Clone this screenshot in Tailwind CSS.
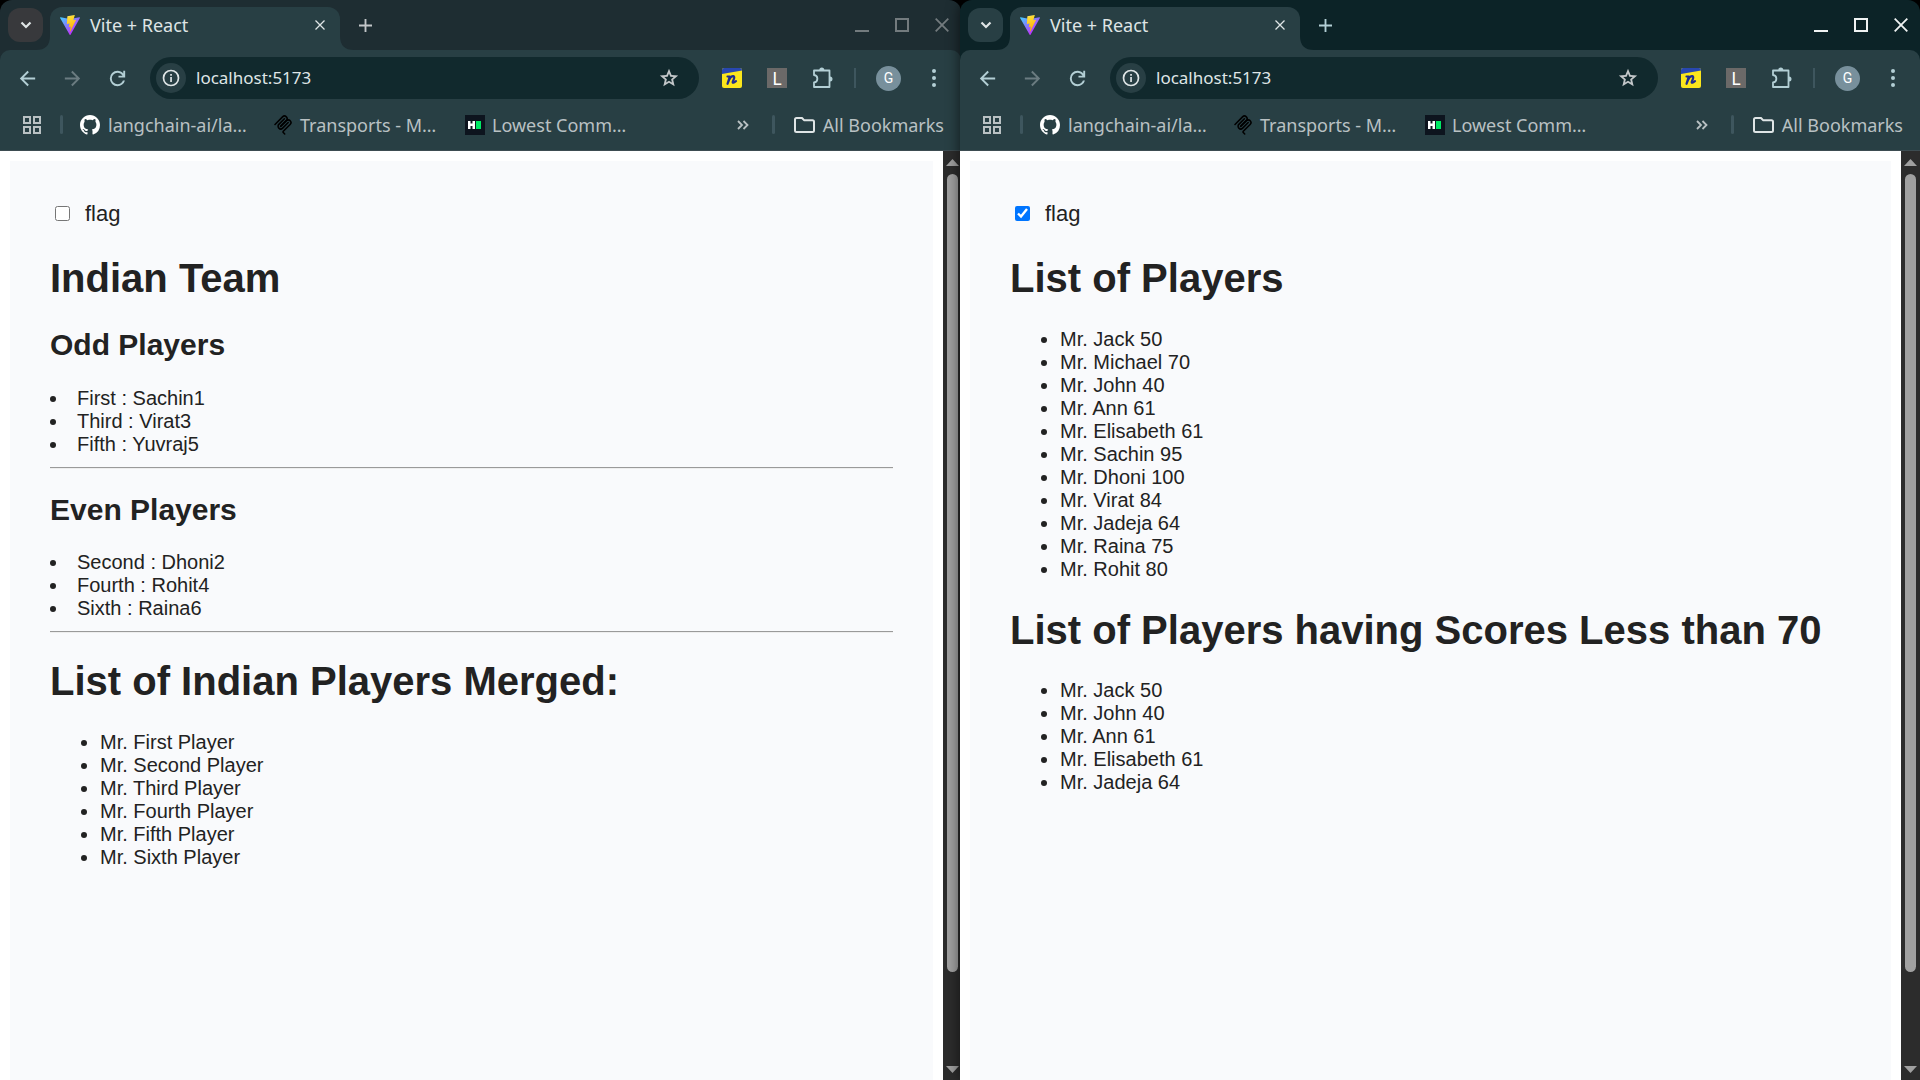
<!DOCTYPE html>
<html lang="en">
<head>
<meta charset="utf-8">
<title>Vite + React</title>
<script src="https://cdn.jsdelivr.net/npm/@tailwindcss/browser@4"></script>
</head>
<body class="bg-black">
<svg class="absolute size-0" aria-hidden="true">
  <defs>
    <linearGradient id="va" x1="0" y1="0" x2="0.7" y2="0.8"><stop offset="0" stop-color="#41d1ff"/><stop offset="1" stop-color="#bd34fe"/></linearGradient>
    <linearGradient id="vb" x1="0.4" y1="0" x2="0.6" y2="1"><stop offset="0" stop-color="#ffea83"/><stop offset="0.1" stop-color="#ffdd35"/><stop offset="1" stop-color="#ffa800"/></linearGradient>
  </defs>
  <symbol id="vite" viewBox="0 0 256 257"><path fill="url(#va)" d="M255.153 37.938 134.897 252.976c-2.483 4.44-8.862 4.466-11.382.048L.875 37.958c-2.746-4.814 1.371-10.646 6.827-9.67l120.385 21.517a6.537 6.537 0 0 0 2.322-.004l117.867-21.483c5.438-.991 9.574 4.796 6.877 9.62Z"/><path fill="url(#vb)" d="M185.432.063 96.44 17.501a3.268 3.268 0 0 0-2.634 3.014l-5.474 92.456a3.268 3.268 0 0 0 3.997 3.378l24.777-5.718c2.318-.535 4.413 1.507 3.936 3.838l-7.361 36.047c-.495 2.426 1.782 4.5 4.151 3.78l15.304-4.649c2.372-.72 4.652 1.36 4.15 3.788l-11.698 56.621c-.732 3.542 3.979 5.473 5.943 2.437l1.313-2.028 72.516-144.72c1.215-2.423-.88-5.186-3.54-4.672l-25.505 4.922c-2.396.462-4.435-1.77-3.759-4.114l16.646-57.705c.677-2.35-1.37-4.583-3.769-4.113Z"/></symbol>
  <symbol id="github" viewBox="0 0 16 16"><path fill="currentColor" d="M8 0C3.58 0 0 3.58 0 8c0 3.54 2.29 6.53 5.47 7.59.4.07.55-.17.55-.38 0-.19-.01-.82-.01-1.49-2.01.37-2.53-.49-2.69-.94-.09-.23-.48-.94-.82-1.13-.28-.15-.68-.52-.01-.53.63-.01 1.08.58 1.23.82.72 1.21 1.87.87 2.33.66.07-.52.28-.87.51-1.07-1.78-.2-3.64-.89-3.64-3.95 0-.87.31-1.59.82-2.15-.08-.2-.36-1.02.08-2.12 0 0 .67-.21 2.2.82.64-.18 1.32-.27 2-.27s1.36.09 2 .27c1.53-1.04 2.2-.82 2.2-.82.44 1.1.16 1.92.08 2.12.51.56.82 1.27.82 2.15 0 3.07-1.87 3.75-3.65 3.95.29.25.54.73.54 1.48 0 1.07-.01 1.93-.01 2.2 0 .21.15.46.55.38A8.01 8.01 0 0 0 16 8c0-4.42-3.58-8-8-8"/></symbol>
  <symbol id="mcp" viewBox="0 0 180 180"><g fill="none" stroke="currentColor" stroke-width="14" stroke-linecap="round"><path d="M18 84.853 85.882 16.97c9.373-9.372 24.569-9.372 33.941 0 9.373 9.373 9.373 24.569 0 33.942L68.558 102.177"/><path d="m69.265 101.47 50.558-50.558c9.373-9.373 24.569-9.373 33.941 0l.354.353c9.372 9.373 9.372 24.569 0 33.941l-61.394 61.394a8 8 0 0 0 0 11.314l12.606 12.606"/><path d="M102.853 33.941 52.648 84.146c-9.373 9.372-9.373 24.568 0 33.941 9.372 9.372 24.568 9.372 33.941 0l50.205-50.205"/></g></symbol>
  <symbol id="hr" viewBox="0 0 20 20"><path fill="#0d141e" d="M0 0h20v20H0z"/><path fill="#fff" d="M3 6h2.500v2.500h2V6H10v8H7.500v-3h-2v3H3z"/><path fill="#00ea64" d="M11 6h5v8h-5z"/></symbol>
  <symbol id="back" viewBox="0 0 24 24"><path fill="currentColor" d="m7.825 13 5.600 5.600L12 20l-8-8 8-8 1.425 1.400L7.825 11H20v2z"/></symbol>
  <symbol id="forward" viewBox="0 0 24 24"><path fill="currentColor" d="M16.175 13H4v-2h12.175l-5.600-5.600L12 4l8 8-8 8-1.425-1.400z"/></symbol>
  <symbol id="reload" viewBox="0 0 24 24"><path fill="currentColor" d="M12 20q-3.350 0-5.675-2.325T4 12t2.325-5.675T12 4q1.725 0 3.300.713T18 6.750V4h2v7h-7V9h4.200q-.8-1.400-2.187-2.200T12 6Q9.500 6 7.750 7.750T6 12t1.750 4.250T12 18q1.925 0 3.475-1.100T17.650 14h2.100q-.7 2.650-2.850 4.325T12 20"/></symbol>
  <symbol id="info" viewBox="0 0 18 18"><circle cx="9" cy="9" r="7.500" fill="none" stroke="currentColor" stroke-width="1.700"/><path fill="currentColor" d="M8.200 8h1.700v5H8.200zM8.200 5h1.700v1.700H8.200z"/></symbol>
  <symbol id="star" viewBox="0 0 24 24"><path fill="currentColor" d="m8.850 16.825 3.150-1.900 3.150 1.925-.825-3.600 2.775-2.400-3.650-.325-1.450-3.400-1.450 3.375-3.650.325 2.775 2.425zM5.825 21l1.625-7.025L2 9.250l7.200-.625L12 2l2.800 6.625 7.200.625-5.450 4.725L18.175 21 12 17.275z"/></symbol>
  <symbol id="puzzle" viewBox="0 0 22 22"><path fill="none" stroke="currentColor" stroke-width="1.800" stroke-linejoin="round" d="M2 3.500h15.500v16.500H2v-4.500c4.500-.5 4.500-7 0-7.500z"/><path fill="currentColor" d="M7.300 3a2.500 2.500 0 0 1 5 0zM18 9.500a2.500 2.500 0 0 1 0 5z"/></symbol>
  <symbol id="next" viewBox="0 0 20 20"><rect width="20" height="20" rx="2" fill="#fbe61c"/><path fill="#2847b0" d="M2 0h16a2 2 0 0 1 2 2v.5L0 6V2a2 2 0 0 1 2-2z"/><path fill="none" stroke="#1c2b8f" stroke-width="2.200" stroke-linecap="round" stroke-linejoin="round" d="M5.500 8.500h2.300L5.500 15.800l1.500-3.800q2-4 4.300-3.800 1.400.3.700 2.500l-1.300 3.300q-.3 1.800 3.300-.8"/></symbol>
  <symbol id="apps" viewBox="0 0 18 18"><path fill="none" stroke="currentColor" stroke-width="2" d="M1 1h6v6H1zM11 1h6v6h-6zM1 11h6v6H1zM11 11h6v6h-6z"/></symbol>
  <symbol id="folder" viewBox="0 0 21 16"><path fill="none" stroke="currentColor" stroke-width="2" stroke-linejoin="round" d="M2.500 1H8l2 2.200h8.500q1.500 0 1.500 1.500v8.800q0 1.500-1.500 1.500h-16Q1 15 1 13.500v-11Q1 1 2.500 1z"/></symbol>
  <symbol id="more" viewBox="0 0 12 10"><path fill="none" stroke="currentColor" stroke-width="1.800" d="m1 1 4 4-4 4M6.500 1l4 4-4 4"/></symbol>
  <symbol id="chevron" viewBox="0 0 12 8"><path fill="none" stroke="currentColor" stroke-width="2.200" d="m1.500 1.500 4.500 4.500 4.500-4.500"/></symbol>
  <symbol id="x" viewBox="0 0 14 14"><path fill="none" stroke="currentColor" stroke-width="1.800" d="m.7.7 12.600 12.600M13.300.7.700 13.300"/></symbol>
  <symbol id="plus" viewBox="0 0 14 14"><path fill="none" stroke="currentColor" stroke-width="2" d="M7 0v14M0 7h14"/></symbol>
  <symbol id="dots" viewBox="0 0 4 18"><g fill="currentColor"><circle cx="2" cy="2" r="2"/><circle cx="2" cy="9" r="2"/><circle cx="2" cy="16" r="2"/></g></symbol>
  <symbol id="flare" viewBox="0 0 14 14"><path fill="currentColor" d="M14 0v14H0Q14 14 14 0z"/></symbol>
</svg>

<main class="grid min-h-screen grid-cols-2 font-['Liberation_Sans',Arial,sans-serif] text-[20px] leading-[23px] text-[#222]">

  <section class="-mr-px flex min-w-0 flex-col overflow-hidden" aria-label="First window">
    <header class="rounded-t-[12px] bg-[#1e2d32] font-['Noto_Sans',sans-serif] text-[18px] leading-6 text-[#dfe5e6]">
      <div class="flex h-[50px] items-center pr-3 pl-2">
        <button aria-label="Search tabs" class="flex h-[34px] w-[35px] items-center justify-center rounded-[12px] bg-[#38393c]"><svg class="h-2 w-3"><use href="#chevron"/></svg></button>
        <div class="relative ml-[7px] flex h-[43px] w-[290px] items-center self-end rounded-t-[12px] bg-[#283f44] pr-[15px] pb-2 pl-[10px]">
          <svg class="absolute bottom-0 -left-[14px] size-[14px] text-[#283f44]"><use href="#flare"/></svg>
          <svg class="absolute -right-[14px] bottom-0 size-[14px] -scale-x-100 text-[#283f44]"><use href="#flare"/></svg>
          <svg class="size-5"><use href="#vite"/></svg>
          <span class="ml-[10px] flex-1">Vite + React</span>
          <button aria-label="Close tab"><svg class="size-[10px]"><use href="#x"/></svg></button>
        </div>
        <button aria-label="New tab" class="ml-[19px] text-[#c3c7c9]"><svg class="size-[13px]"><use href="#plus"/></svg></button>
        <div class="ml-auto flex items-center gap-[26px] text-[#737b7e]">
          <button aria-label="Minimize" class="h-[14px] w-[14px] border-b-2 border-current"></button>
          <button aria-label="Maximize" class="size-[14px] border-2 border-current"></button>
          <button aria-label="Close window"><svg class="size-[14px]"><use href="#x"/></svg></button>
        </div>
      </div>
      <div class="rounded-t-[10px] border-b border-[#3d4c51] bg-[#283f44]">
        <div class="flex h-14 items-center pr-[25px] pl-4 text-[#b3cfd5]">
          <button aria-label="Back"><svg class="size-[23px]"><use href="#back"/></svg></button>
          <button aria-label="Forward" class="ml-[22px] text-[#6b7c81]"><svg class="size-[23px]"><use href="#forward"/></svg></button>
          <button aria-label="Reload" class="ml-[22px]"><svg class="size-[23px]"><use href="#reload"/></svg></button>
          <div class="ml-[21px] flex h-[42px] flex-1 items-center rounded-full bg-[#11292d] pr-[19px] pl-[6px] text-[#dfe5e6]">
            <button aria-label="Site information" class="flex size-[30px] items-center justify-center rounded-full bg-[#283f44]"><svg class="size-[18px]"><use href="#info"/></svg></button>
            <input aria-label="Address" value="localhost:5173" class="ml-[10px] min-w-0 flex-1 bg-transparent text-[17px] outline-none">
            <button aria-label="Bookmark this page" class="text-[#c3c7c9]"><svg class="size-[22px]"><use href="#star"/></svg></button>
          </div>
          <button aria-label="Notes extension" class="ml-[23px]"><svg class="size-5"><use href="#next"/></svg></button>
          <button aria-label="L extension" class="ml-[25px] flex h-5 w-5 items-center justify-center bg-[#6b6968] text-white">L</button>
          <button aria-label="Extensions" class="ml-[25px]"><svg class="size-[22px]"><use href="#puzzle"/></svg></button>
          <span class="ml-[20px] h-5 w-[2px] bg-[#3e565e]"></span>
          <button aria-label="Profile" class="ml-[20px] flex size-[25px] items-center justify-center rounded-full bg-[#78909c] font-['Roboto',sans-serif] text-[14px] text-white">G</button>
          <button aria-label="Menu" class="ml-[31px]"><svg class="h-[18px] w-1"><use href="#dots"/></svg></button>
        </div>
        <nav aria-label="Bookmarks" class="flex h-11 items-center pr-[17px] pb-[7px] pl-[23px] whitespace-nowrap text-[#b9c1c3]">
          <button aria-label="Apps"><svg class="size-[18px]"><use href="#apps"/></svg></button>
          <span class="ml-[19px] h-[19px] w-[3px] rounded bg-[#3e565e]"></span>
          <a href="#" class="ml-[17px] flex w-[169px] items-center gap-2"><svg class="size-5 shrink-0 text-white"><use href="#github"/></svg>langchain-ai/la…</a>
          <a href="#" class="ml-[24px] flex w-[166px] items-center gap-[7px]"><svg class="size-5 shrink-0 text-black"><use href="#mcp"/></svg>Transports - M…</a>
          <a href="#" class="ml-[26px] flex items-center gap-[7px]"><svg class="size-5 shrink-0"><use href="#hr"/></svg>Lowest Comm…</a>
          <button aria-label="More bookmarks" class="ml-auto"><svg class="h-[10px] w-3"><use href="#more"/></svg></button>
          <span class="ml-[23px] h-[19px] w-[3px] rounded bg-[#3e565e]"></span>
          <button class="ml-[19px] flex items-center gap-2"><svg class="h-4 w-[21px] text-[#dfe5e6]"><use href="#folder"/></svg>All Bookmarks</button>
        </nav>
      </div>
    </header>
    <div class="flex flex-1">
      <div class="flex min-w-0 flex-1 flex-col bg-white px-[10px] pt-[10px]">
        <article class="flex-1 bg-[#f9fafc] p-10">
          <label class="mb-[29px] flex items-center text-[22px] leading-[25px]"><input type="checkbox" class="mr-[15px] ml-[5px] size-[15px]">flag</label>
          <h1 class="mb-[27px] text-[40px] leading-[46px] font-bold">Indian Team</h1>
          <h2 class="mb-[25px] text-[30px] leading-[34px] font-bold">Odd Players</h2>
          <ul class="list-inside list-disc"><li>First : Sachin1</li><li>Third : Virat3</li><li>Fifth : Yuvraj5</li></ul>
          <hr class="mt-[11px] mb-6 h-[2px] border-t border-b border-t-[#9a9a9a] border-b-[#eee]">
          <h2 class="mb-6 text-[30px] leading-[34px] font-bold">Even Players</h2>
          <ul class="list-inside list-disc"><li>Second : Dhoni2</li><li>Fourth : Rohit4</li><li>Sixth : Raina6</li></ul>
          <hr class="mt-[11px] mb-[25px] h-[2px] border-t border-b border-t-[#9a9a9a] border-b-[#eee]">
          <h1 class="mb-[27px] text-[40px] leading-[46px] font-bold">List of Indian Players Merged:</h1>
          <ul class="list-disc pl-[50px]"><li>Mr. First Player</li><li>Mr. Second Player</li><li>Mr. Third Player</li><li>Mr. Fourth Player</li><li>Mr. Fifth Player</li><li>Mr. Sixth Player</li></ul>
        </article>
      </div>
      <div class="flex w-[18px] flex-col items-center bg-[#2c2c2c]">
        <svg class="mt-2 mb-2 h-[7px] w-[13px]" viewBox="0 0 13 7"><path fill="#a0a0a0" d="M6.500 0 13 7H0z"/></svg>
        <div class="w-full flex-1 pr-[3px] pl-1"><div class="w-full rounded-full bg-[#a0a0a0]" style="height:90.300%"></div></div>
        <svg class="mt-2 mb-[7px] h-[7px] w-[13px]" viewBox="0 0 13 7"><path fill="#a0a0a0" d="M0 0h13L6.500 7z"/></svg>
      </div>
    </div>
  </section>

  <section class="relative flex min-w-0 flex-col rounded-t-[12px] shadow-[0_0_14px_rgba(0,0,0,0.6)]" aria-label="Second window">
    <header class="rounded-t-[12px] bg-[#0c2327] font-['Noto_Sans',sans-serif] text-[18px] leading-6 text-[#dfe5e6]">
      <div class="flex h-[50px] items-center pr-3 pl-2">
        <button aria-label="Search tabs" class="flex h-[34px] w-[35px] items-center justify-center rounded-[12px] bg-[#283f44]"><svg class="h-2 w-3"><use href="#chevron"/></svg></button>
        <div class="relative ml-[7px] flex h-[43px] w-[290px] items-center self-end rounded-t-[12px] bg-[#283f44] pr-[15px] pb-2 pl-[10px]">
          <svg class="absolute bottom-0 -left-[14px] size-[14px] text-[#283f44]"><use href="#flare"/></svg>
          <svg class="absolute -right-[14px] bottom-0 size-[14px] -scale-x-100 text-[#283f44]"><use href="#flare"/></svg>
          <svg class="size-5"><use href="#vite"/></svg>
          <span class="ml-[10px] flex-1">Vite + React</span>
          <button aria-label="Close tab"><svg class="size-[10px]"><use href="#x"/></svg></button>
        </div>
        <button aria-label="New tab" class="ml-[19px] text-[#b3cfd5]"><svg class="size-[13px]"><use href="#plus"/></svg></button>
        <div class="ml-auto flex items-center gap-[26px] text-[#f0f3f3]">
          <button aria-label="Minimize" class="h-[14px] w-[14px] border-b-2 border-current"></button>
          <button aria-label="Maximize" class="size-[14px] border-2 border-current"></button>
          <button aria-label="Close window"><svg class="size-[14px]"><use href="#x"/></svg></button>
        </div>
      </div>
      <div class="rounded-t-[10px] border-b border-[#3d4c51] bg-[#283f44]">
        <div class="flex h-14 items-center pr-[25px] pl-4 text-[#b3cfd5]">
          <button aria-label="Back"><svg class="size-[23px]"><use href="#back"/></svg></button>
          <button aria-label="Forward" class="ml-[22px] text-[#6b7c81]"><svg class="size-[23px]"><use href="#forward"/></svg></button>
          <button aria-label="Reload" class="ml-[22px]"><svg class="size-[23px]"><use href="#reload"/></svg></button>
          <div class="ml-[21px] flex h-[42px] flex-1 items-center rounded-full bg-[#11292d] pr-[19px] pl-[6px] text-[#dfe5e6]">
            <button aria-label="Site information" class="flex size-[30px] items-center justify-center rounded-full bg-[#283f44]"><svg class="size-[18px]"><use href="#info"/></svg></button>
            <input aria-label="Address" value="localhost:5173" class="ml-[10px] min-w-0 flex-1 bg-transparent text-[17px] outline-none">
            <button aria-label="Bookmark this page" class="text-[#c3c7c9]"><svg class="size-[22px]"><use href="#star"/></svg></button>
          </div>
          <button aria-label="Notes extension" class="ml-[23px]"><svg class="size-5"><use href="#next"/></svg></button>
          <button aria-label="L extension" class="ml-[25px] flex h-5 w-5 items-center justify-center bg-[#6b6968] text-white">L</button>
          <button aria-label="Extensions" class="ml-[25px]"><svg class="size-[22px]"><use href="#puzzle"/></svg></button>
          <span class="ml-[20px] h-5 w-[2px] bg-[#3e565e]"></span>
          <button aria-label="Profile" class="ml-[20px] flex size-[25px] items-center justify-center rounded-full bg-[#78909c] font-['Roboto',sans-serif] text-[14px] text-white">G</button>
          <button aria-label="Menu" class="ml-[31px]"><svg class="h-[18px] w-1"><use href="#dots"/></svg></button>
        </div>
        <nav aria-label="Bookmarks" class="flex h-11 items-center pr-[17px] pb-[7px] pl-[23px] whitespace-nowrap text-[#b9c1c3]">
          <button aria-label="Apps"><svg class="size-[18px]"><use href="#apps"/></svg></button>
          <span class="ml-[19px] h-[19px] w-[3px] rounded bg-[#3e565e]"></span>
          <a href="#" class="ml-[17px] flex w-[169px] items-center gap-2"><svg class="size-5 shrink-0 text-white"><use href="#github"/></svg>langchain-ai/la…</a>
          <a href="#" class="ml-[24px] flex w-[166px] items-center gap-[7px]"><svg class="size-5 shrink-0 text-black"><use href="#mcp"/></svg>Transports - M…</a>
          <a href="#" class="ml-[26px] flex items-center gap-[7px]"><svg class="size-5 shrink-0"><use href="#hr"/></svg>Lowest Comm…</a>
          <button aria-label="More bookmarks" class="ml-auto"><svg class="h-[10px] w-3"><use href="#more"/></svg></button>
          <span class="ml-[23px] h-[19px] w-[3px] rounded bg-[#3e565e]"></span>
          <button class="ml-[19px] flex items-center gap-2"><svg class="h-4 w-[21px] text-[#dfe5e6]"><use href="#folder"/></svg>All Bookmarks</button>
        </nav>
      </div>
    </header>
    <div class="flex flex-1">
      <div class="flex min-w-0 flex-1 flex-col bg-white px-[10px] pt-[10px]">
        <article class="flex-1 bg-[#f9fafc] p-10">
          <label class="mb-[29px] flex items-center text-[22px] leading-[25px]"><input type="checkbox" checked class="mr-[15px] ml-[5px] size-[15px]">flag</label>
          <h1 class="mb-[27px] text-[40px] leading-[46px] font-bold">List of Players</h1>
          <ul class="list-disc pl-[50px]"><li>Mr. Jack 50</li><li>Mr. Michael 70</li><li>Mr. John 40</li><li>Mr. Ann 61</li><li>Mr. Elisabeth 61</li><li>Mr. Sachin 95</li><li>Mr. Dhoni 100</li><li>Mr. Virat 84</li><li>Mr. Jadeja 64</li><li>Mr. Raina 75</li><li>Mr. Rohit 80</li></ul>
          <h1 class="mt-[26px] mb-[26px] text-[40px] leading-[46px] font-bold">List of Players having Scores Less than 70</h1>
          <ul class="list-disc pl-[50px]"><li>Mr. Jack 50</li><li>Mr. John 40</li><li>Mr. Ann 61</li><li>Mr. Elisabeth 61</li><li>Mr. Jadeja 64</li></ul>
        </article>
      </div>
      <div class="flex w-[19px] flex-col items-center bg-[#2c2c2c]">
        <svg class="mt-2 mb-2 h-[7px] w-[13px]" viewBox="0 0 13 7"><path fill="#a0a0a0" d="M6.500 0 13 7H0z"/></svg>
        <div class="w-full flex-1 px-1"><div class="w-full rounded-full bg-[#a0a0a0]" style="height:90.300%"></div></div>
        <svg class="mt-2 mb-[7px] h-[7px] w-[13px]" viewBox="0 0 13 7"><path fill="#a0a0a0" d="M0 0h13L6.500 7z"/></svg>
      </div>
    </div>
  </section>
</main>
</body>
</html>
